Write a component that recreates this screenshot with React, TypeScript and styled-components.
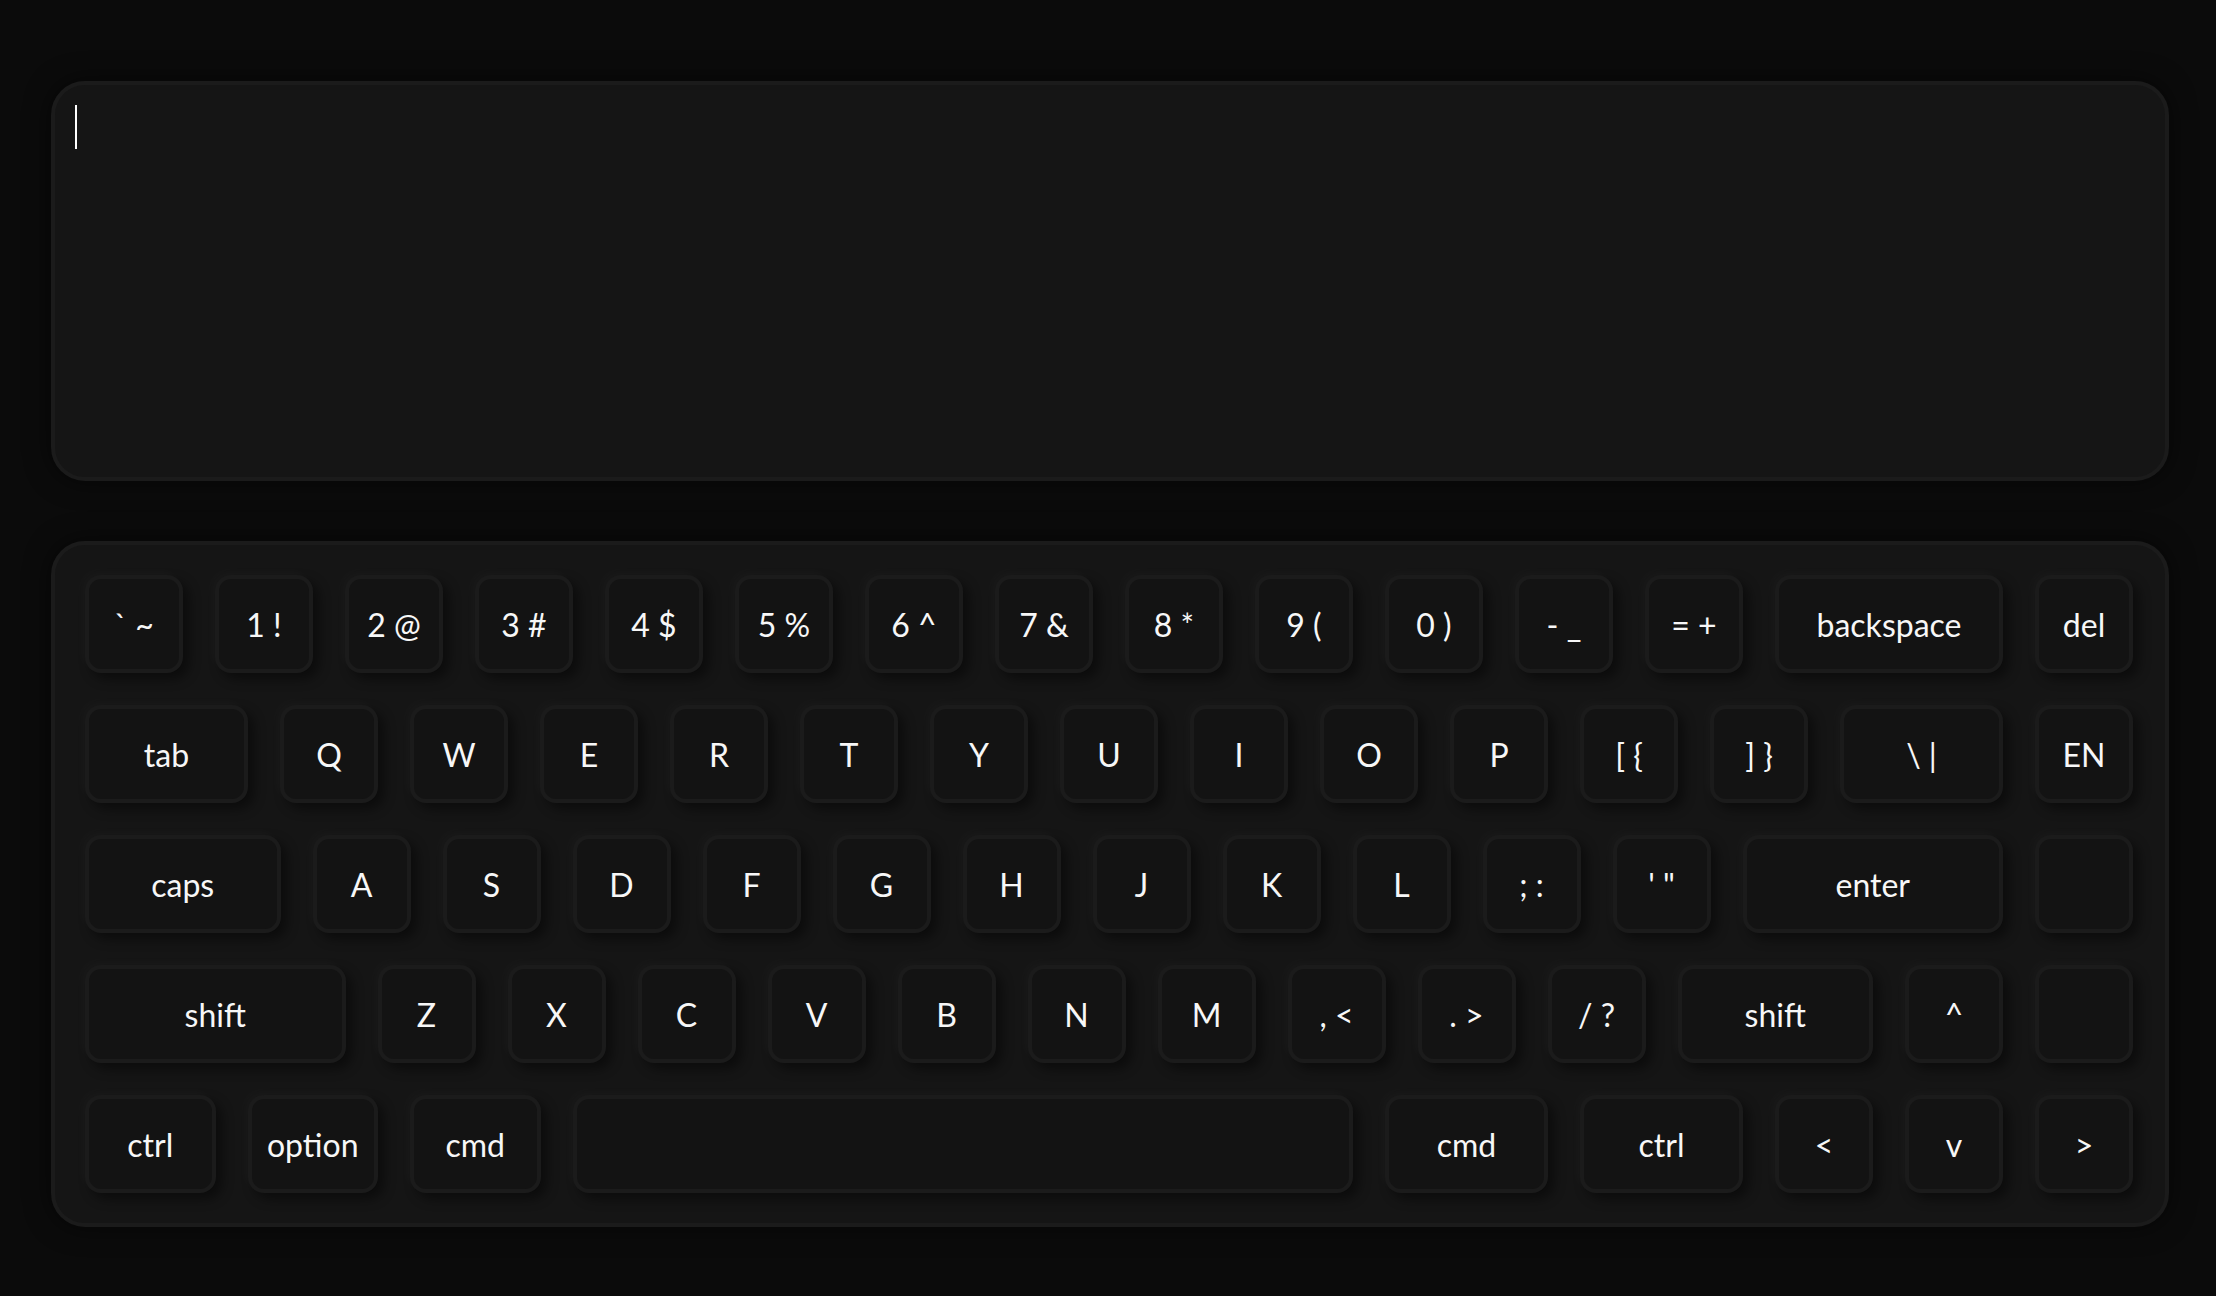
import React from 'react';
import styled, { createGlobalStyle } from 'styled-components';

const UNIT = 130;
const GAP = 32;

type KeyDef = { label: string; u?: number };

const rows: KeyDef[][] = [
  [
    { label: '` ~' },
    { label: '1 !' },
    { label: '2 @' },
    { label: '3 #' },
    { label: '4 $' },
    { label: '5 %' },
    { label: '6 ^' },
    { label: '7 &' },
    { label: '8 *' },
    { label: '9 (' },
    { label: '0 )' },
    { label: '- _' },
    { label: '= +' },
    { label: 'backspace', u: 2 },
    { label: 'del' },
  ],
  [
    { label: 'tab', u: 1.5 },
    ...'QWERTYUIOP'.split('').map((c) => ({ label: c })),
    { label: '[ {' },
    { label: '] }' },
    { label: '\\ |', u: 1.5 },
    { label: 'EN' },
  ],
  [
    { label: 'caps', u: 1.75 },
    ...'ASDFGHJKL'.split('').map((c) => ({ label: c })),
    { label: '; :' },
    { label: '\' "' },
    { label: 'enter', u: 2.25 },
    { label: '' },
  ],
  [
    { label: 'shift', u: 2.25 },
    ...'ZXCVBNM'.split('').map((c) => ({ label: c })),
    { label: ', <' },
    { label: '. >' },
    { label: '/ ?' },
    { label: 'shift', u: 1.75 },
    { label: '^' },
    { label: '' },
  ],
  [
    { label: 'ctrl', u: 1.25 },
    { label: 'option', u: 1.25 },
    { label: 'cmd', u: 1.25 },
    { label: '', u: 6.25 },
    { label: 'cmd', u: 1.5 },
    { label: 'ctrl', u: 1.5 },
    { label: '<' },
    { label: 'v' },
    { label: '>' },
  ],
];

const GlobalStyle = createGlobalStyle`
  html, body {
    margin: 0;
    padding: 0;
    background: #0b0b0b;
  }
  body {
    font-family: Lato, 'Noto Sans', sans-serif;
    color: #f5f5f5;
  }
`;

const Page = styled.main`
  min-height: 100vh;
  box-sizing: border-box;
  padding: 81px 47px 60px 51px;
  display: flex;
  flex-direction: column;
  gap: 60px;
`;

const Panel = styled.section`
  box-sizing: border-box;
  background: #151515;
  border: 4px solid #1b1b1b;
  border-radius: 34px;
  box-shadow: 0 0 26px rgba(0, 0, 0, 0.55);
`;

const Display = styled(Panel)`
  height: 400px;
  padding: 20px;
`;

const Caret = styled.span`
  display: block;
  width: 2px;
  height: 44px;
  background: #ffffff;
`;

const Keyboard = styled(Panel)`
  padding: 30px;
  display: flex;
  flex-direction: column;
  gap: ${GAP}px;
`;

const Row = styled.div`
  display: flex;
  gap: ${GAP}px;
`;

const Key = styled.button<{ $u: number }>`
  box-sizing: border-box;
  flex: 0 0 ${({ $u }) => $u * UNIT - GAP}px;
  height: 98px;
  display: flex;
  align-items: center;
  justify-content: center;
  padding: 0;
  background: #131313;
  border: 4px solid #1b1b1b;
  border-radius: 16px;
  box-shadow: 6px 6px 12px rgba(0, 0, 0, 0.45),
    -4px -4px 10px rgba(255, 255, 255, 0.025);
  color: #f7f7f7;
  font-family: Lato, 'Noto Sans', sans-serif;
  font-size: 32px;
  font-weight: 400;
  white-space: pre;
  cursor: pointer;
`;

const App = () => {
  return (
    <>
      <GlobalStyle />
      <Page>
        <Display>
          <Caret />
        </Display>
        <Keyboard>
          {rows.map((row, i) => (
            <Row key={i}>
              {row.map((k, j) => (
                <Key key={j} $u={k.u ?? 1}>
                  {k.label}
                </Key>
              ))}
            </Row>
          ))}
        </Keyboard>
      </Page>
    </>
  );
};

export default App;
